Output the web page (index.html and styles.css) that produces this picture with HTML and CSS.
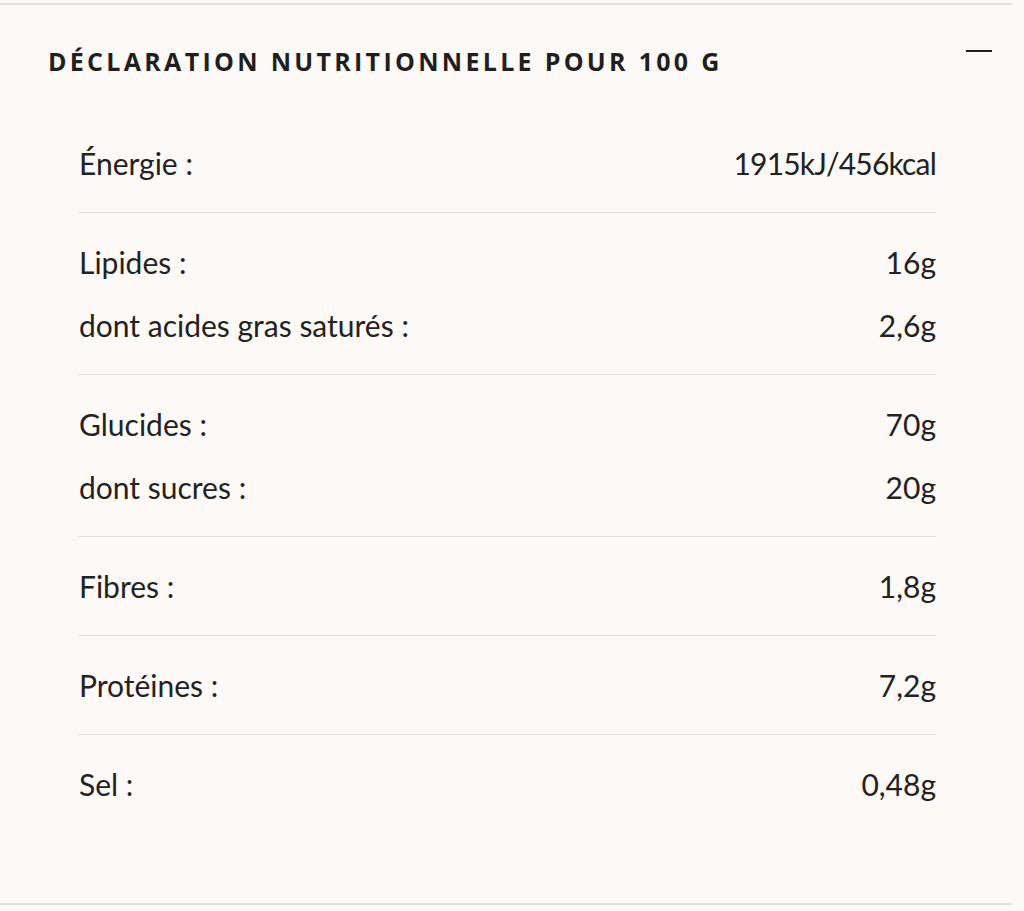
FILE: index.html
```html
<!DOCTYPE html>
<html lang="fr">
<head>
<meta charset="utf-8">
<title>Déclaration nutritionnelle</title>
<link rel="stylesheet" href="styles.css">
</head>
<body>
<section class="panel">
  <header class="panel-head">
    <h2 class="panel-title">DÉCLARATION NUTRITIONNELLE POUR 100 G</h2>
    <span class="toggle" aria-hidden="true"></span>
  </header>
  <div class="table">
    <div class="group">
      <div class="row"><span>Énergie :</span><span class="value-long">1915kJ/456kcal</span></div>
    </div>
    <div class="group">
      <div class="row"><span>Lipides :</span><span>16g</span></div>
      <div class="row"><span>dont acides gras saturés :</span><span>2,6g</span></div>
    </div>
    <div class="group">
      <div class="row"><span>Glucides :</span><span>70g</span></div>
      <div class="row"><span>dont sucres :</span><span>20g</span></div>
    </div>
    <div class="group">
      <div class="row"><span>Fibres :</span><span>1,8g</span></div>
    </div>
    <div class="group">
      <div class="row"><span>Protéines :</span><span>7,2g</span></div>
    </div>
    <div class="group">
      <div class="row"><span>Sel :</span><span>0,48g</span></div>
    </div>
  </div>
</section>
</body>
</html>
```
FILE: styles.css
```css
html, body {
  margin: 0;
  padding: 0;
  background: #fdf9f6;
}
body {
  padding-top: 3px;
  color: #222222;
}
.panel {
  width: 1012px;
  border-top: 2px solid #e3e2e1;
  border-bottom: 2px solid #e3e2e1;
  padding-bottom: 70px;
}
.panel-head {
  display: flex;
  align-items: flex-start;
  justify-content: space-between;
  height: 109px;
  padding: 41px 20px 0 48px;
  box-sizing: border-box;
}
.panel-title {
  margin: 0;
  font-family: "Open Sans", sans-serif;
  font-weight: 700;
  font-size: 25px;
  letter-spacing: 3.3px;
  line-height: 30px;
  color: #1f1f1f;
}
.toggle {
  width: 26px;
  height: 2px;
  margin-top: 4px;
  background: #222222;
}
.table {
  padding: 0 76px 0 78px;
}
.group {
  padding: 17.5px 0;
  border-bottom: 1px solid #dfe1e3;
}
.group:last-child {
  border-bottom: none;
}
.row {
  height: 63px;
  display: flex;
  align-items: center;
  justify-content: space-between;
  font-family: "Lato", sans-serif;
  font-size: 30px;
  padding-left: 1px;
}
.value-long {
  letter-spacing: -0.8px;
}
```
